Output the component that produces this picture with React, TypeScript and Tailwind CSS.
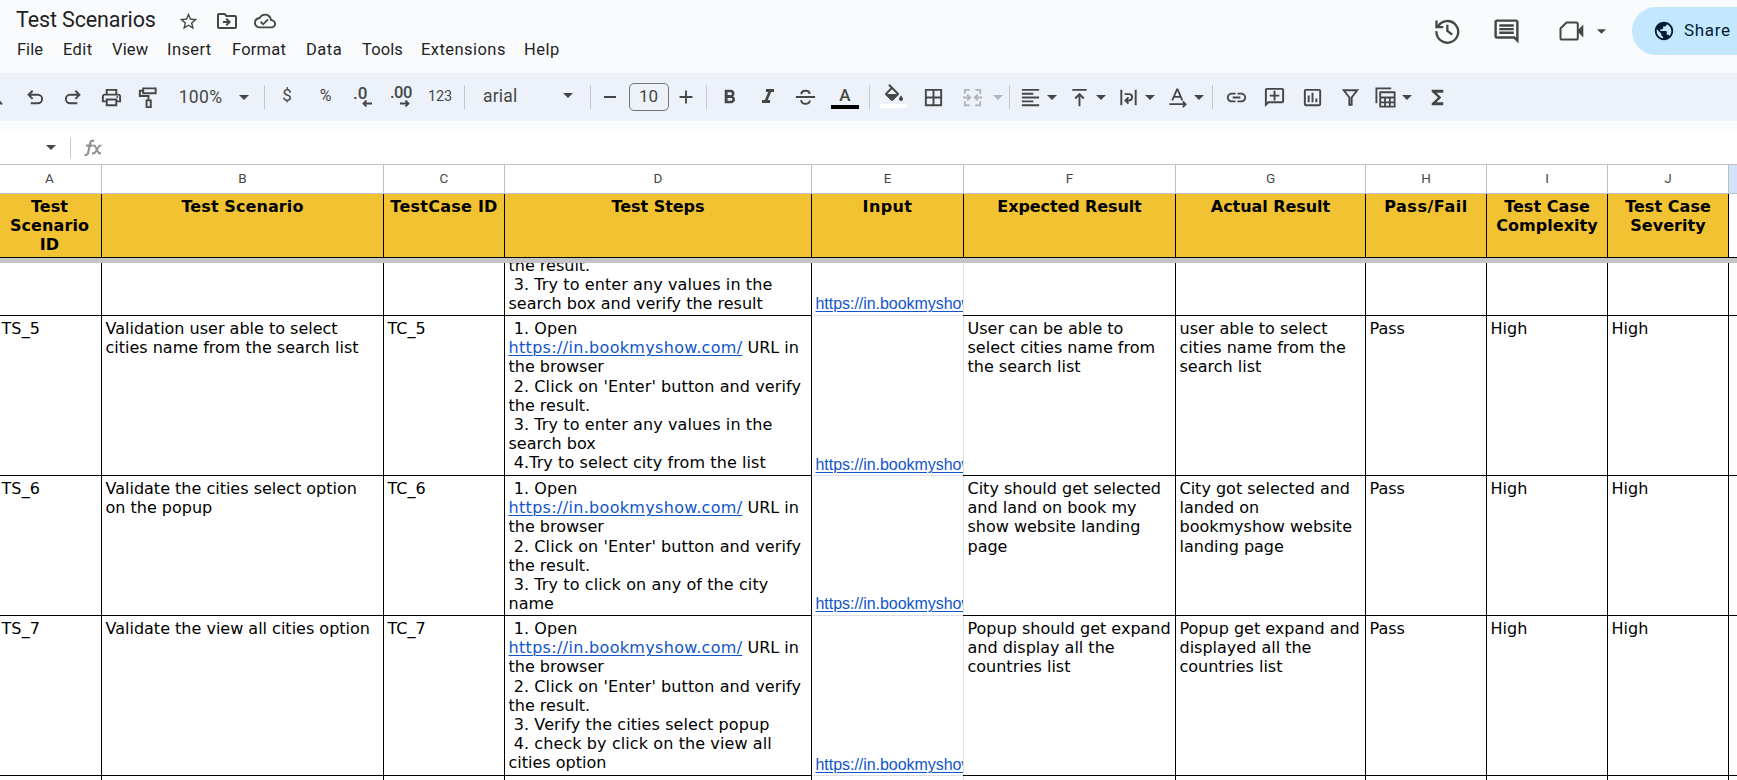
import React from "react";
import {
  MdStarBorder,
  MdOutlineDriveFileMove,
  MdOutlineCloudDone,
  MdOutlinePrint,
  MdFormatBold,
  MdFormatItalic,
  MdBorderAll,
  MdFormatAlignLeft,
  MdLink,
  MdOutlineAddComment,
  MdOutlineInsertChart,
  MdFunctions,
  MdOutlineComment,
  MdPublic,
} from "react-icons/md";

const URL_TEXT = "https://in.bookmyshow.com/";

type Row = {
  height: string;
  id: string;
  scenario: string[];
  tc: string;
  steps: string[];
  expected: string[];
  actual: string[];
  pass: string;
  level: string;
  clipped?: boolean;
  linkPad: string;
};

const openSteps = [" 1. Open", URL_TEXT + " URL in", "the browser", " 2. Click on 'Enter' button and verify", "the result."];

const rows: Row[] = [
  {
    height: "h-[52px]",
    id: "",
    scenario: [],
    tc: "",
    steps: ["the result.", " 3. Try to enter any values in the", "search box and verify the result"],
    expected: [],
    actual: [],
    pass: "",
    level: "",
    clipped: true,
    linkPad: "pb-0.5",
  },
  {
    height: "h-[159px]",
    id: "TS_5",
    scenario: ["Validation user able to select", "cities name from the search list"],
    tc: "TC_5",
    steps: [...openSteps, " 3. Try to enter any values in the", "search box", " 4.Try to select city from the list"],
    expected: ["User can be able to", "select cities name from", "the search list"],
    actual: ["user able to select", "cities name from the", "search list"],
    pass: "Pass",
    level: "High",
    linkPad: "pb-px",
  },
  {
    height: "h-[139px]",
    id: "TS_6",
    scenario: ["Validate the cities select option", "on the popup"],
    tc: "TC_6",
    steps: [...openSteps, " 3. Try to click on any of the city", "name"],
    expected: ["City should get selected", "and land on book my", "show website landing", "page"],
    actual: ["City got selected and", "landed on", "bookmyshow website", "landing page"],
    pass: "Pass",
    level: "High",
    linkPad: "pb-0.5",
  },
  {
    height: "h-[159px]",
    id: "TS_7",
    scenario: ["Validate the view all cities option"],
    tc: "TC_7",
    steps: [...openSteps, " 3. Verify the cities select popup", " 4. check by click on the view all", "cities option"],
    expected: ["Popup should get expand", "and display all the", "countries list"],
    actual: ["Popup get expand and", "displayed all the", "countries list"],
    pass: "Pass",
    level: "High",
    linkPad: "pb-px",
  },
];

const columns = [
  { letter: "A", w: "w-[102px] pr-0.5", title: ["Test", "Scenario", "ID"], track: "tracking-[0.1px]" },
  { letter: "B", w: "w-[282px]", title: ["Test Scenario"], track: "tracking-[0.1px]" },
  { letter: "C", w: "w-[121px]", title: ["TestCase ID"], track: "tracking-[0.25px]" },
  { letter: "D", w: "w-[307px]", title: ["Test Steps"], track: "tracking-[-0.05px]" },
  { letter: "E", w: "w-[152px]", title: ["Input"], track: "tracking-[0.4px]" },
  { letter: "F", w: "w-[212px]", title: ["Expected Result"], track: "tracking-[-0.1px]" },
  { letter: "G", w: "w-[190px]", title: ["Actual Result"], track: "tracking-[-0.05px]" },
  { letter: "H", w: "w-[121px]", title: ["Pass/Fail"], track: "tracking-[0.55px]" },
  { letter: "I", w: "w-[121px]", title: ["Test Case", "Complexity"], track: "tracking-[0.05px]" },
  { letter: "J", w: "w-[121px]", title: ["Test Case", "Severity"], track: "tracking-[0.05px]" },
];

function Slot({ className, children }: { className: string; children?: React.ReactNode }) {
  return <div className={`flex h-12 shrink-0 items-center justify-center ${className}`}>{children}</div>;
}

function Caret({ className = "" }: { className?: string }) {
  return (
    <svg className={`shrink-0 ${className}`} width="10" height="5" viewBox="0 0 10 5" fill="currentColor">
      <path d="M0 0h10L5 5z" />
    </svg>
  );
}

function Divider({ className }: { className: string }) {
  return <div className={`h-6 w-px shrink-0 bg-[#c7c7c7] ${className}`} />;
}

function Stroke({
  size = 23,
  children,
  width = 2,
  className = "",
}: {
  size?: number;
  children: React.ReactNode;
  width?: number;
  className?: string;
}) {
  return (
    <svg
      className={`shrink-0 ${className}`}
      width={size}
      height={size}
      viewBox="0 0 24 24"
      fill="none"
      stroke="currentColor"
      strokeWidth={width}
    >
      {children}
    </svg>
  );
}

function Lines({ lines }: { lines: string[] }) {
  return (
    <>
      {lines.map((line, i) => (
        <div key={i} className={`h-[19.2px] shrink-0 whitespace-pre ${line.startsWith(" ") ? "tracking-[0.1px]" : ""}`}>
          {line.startsWith(URL_TEXT) ? (
            <>
              <span className="tracking-[0.32px] text-[#1155cc] underline decoration-1 underline-offset-2">{URL_TEXT}</span>
              {line.slice(URL_TEXT.length)}
            </>
          ) : (
            line
          )}
        </div>
      ))}
    </>
  );
}

function Cell({ className, lines, bottom }: { className: string; lines: string[]; bottom?: boolean }) {
  return (
    <div
      className={`flex shrink-0 flex-col overflow-hidden border-r border-black pl-[3.5px] ${bottom ? "justify-end pb-[1.6px]" : "pt-[3px]"} ${className}`}
    >
      <Lines lines={lines} />
    </div>
  );
}

function RowLine() {
  return (
    <div className="flex h-px shrink-0">
      <div className="w-[812px] shrink-0 bg-black" />
      <div className="w-[151px] shrink-0 bg-[#e1e1e1]" />
      <div className="flex-1 bg-black" />
    </div>
  );
}

function Header() {
  const menus = [
    ["File", "w-[46px]"],
    ["Edit", "w-[49px] tracking-[0.4px]"],
    ["View", "w-[55px] tracking-[0.15px]"],
    ["Insert", "w-[65px] tracking-[0.4px]"],
    ["Format", "w-[74px] tracking-[0.2px]"],
    ["Data", "w-[56px] tracking-[0.5px]"],
    ["Tools", "w-[59px] tracking-[0.1px]"],
    ["Extensions", "w-[103px] tracking-[0.45px]"],
    ["Help", "w-[50px] tracking-[0.5px]"],
  ];
  return (
    <header className="flex h-[73px] shrink-0 items-start justify-between">
      <div className="flex flex-col text-[#1f1f1f]">
        <div className="flex h-10 items-center pl-4 text-[#444746]">
          <div className="w-[161px] whitespace-nowrap text-[21.5px] tracking-[-0.12px] text-[#1f1f1f]">Test Scenarios</div>
          <div className="flex items-center pl-px pt-0.5">
            <MdStarBorder className="size-[21px]" />
            <MdOutlineDriveFileMove className="ml-4 size-6" />
            <MdOutlineCloudDone className="ml-[15px] size-[22px]" />
          </div>
        </div>
        <nav className="flex h-5 items-center pl-[17px] text-[16.5px]">
          {menus.map(([m, w]) => (
            <div key={m} className={`shrink-0 whitespace-nowrap pt-px ${w}`}>
              {m}
            </div>
          ))}
        </nav>
      </div>
      <div className="flex h-[62px] items-center text-[#444746]">
        <Stroke size={28} width={2} className="mb-0.5">
          <path d="M4.2 9A9.300 9.300 0 1 1 3 13" />
          <path d="M3 3.8v5.800h5.800M12.300 7.500v5.200l4.200 3.300" />
        </Stroke>
        <MdOutlineComment className="ml-[31px] size-[29px]" />
        <svg className="ml-[38px]" width="25" height="20" viewBox="0 0 25 20">
          <path d="M7.5 1.500h9.700q1.600 0 1.600 1.600v13.800q0 1.600-1.600 1.600H3.100q-1.600 0-1.600-1.600V7.500z" fill="none" stroke="currentColor" strokeWidth="2" />
          <path d="M19 9l5.300-5.500v13L19 11z" fill="currentColor" />
        </svg>
        <Caret className="ml-[13px] w-[9px]" />
        <button className="ml-[26px] flex h-12 w-[105px] items-center rounded-l-full bg-[#c2e7ff] pl-[21px] text-[17px] tracking-[0.7px] text-[#001d35]">
          <MdPublic className="mr-[9px] size-[22px]" />
          Share
        </button>
      </div>
    </header>
  );
}

function Toolbar() {
  return (
    <div className="flex h-12 shrink-0 items-center overflow-hidden bg-[#edf2fa] text-[#444746]">
      <Slot className="w-[17px]">
        <svg width="17" height="20" viewBox="0 0 17 20" stroke="currentColor" strokeWidth="2">
          <path d="M-4 10l6 7.5" />
        </svg>
      </Slot>
      <Slot className="w-[37px]">
        <Stroke>
          <path d="M9 5L4.8 9.2L9 13.4M5 9.2h9.5a4.4 4.4 0 0 1 0 8.8H7" />
        </Stroke>
      </Slot>
      <Slot className="w-[37px]">
        <Stroke>
          <path d="M15 5l4.2 4.2L15 13.4M19 9.2H9.5a4.4 4.4 0 0 0 0 8.8H17" />
        </Stroke>
      </Slot>
      <Slot className="w-10">
        <MdOutlinePrint className="size-[23px]" />
      </Slot>
      <Slot className="w-[34px] pr-[1.5px]">
        <Stroke>
          <path d="M7.5 2.5h13v5h-13zM7.5 5H4v5.5h9V15M11 15h4.4v7H11z" />
        </Stroke>
      </Slot>
      <Slot className="w-[71px] text-[17.5px] tracking-[0.3px]">100%</Slot>
      <Slot className="w-4">
        <Caret />
      </Slot>
      <Divider className="ml-3" />
      <Slot className="w-11 pb-0.5 text-[17px]">$</Slot>
      <Slot className="w-[33px] pb-0.5 text-base">%</Slot>
      <Slot className="w-[41px]">
        <div className="flex w-[19px] flex-col pb-px">
          <span className="h-3.5 text-[17px] font-medium leading-[14px]">.0</span>
          <svg className="ml-[9px]" width="10" height="7" viewBox="0 0 10 7" fill="none" stroke="currentColor" strokeWidth="1.8">
            <path d="M10 3.5H1.5M4.5.5l-3 3 3 3" />
          </svg>
        </div>
      </Slot>
      <Slot className="w-9">
        <div className="flex w-[22px] flex-col pb-px">
          <span className="h-3.5 text-[16.5px] font-medium leading-[14px] tracking-[-0.5px]">.00</span>
          <svg className="ml-[10px]" width="10" height="7" viewBox="0 0 10 7" fill="none" stroke="currentColor" strokeWidth="1.8">
            <path d="M0 3.5h8.5M5.5.5l3 3-3 3" />
          </svg>
        </div>
      </Slot>
      <Slot className="w-[43px] pr-px text-[14.5px] tracking-[-0.2px]">123</Slot>
      <Divider className="ml-0.5" />
      <div className="flex h-12 w-[94px] shrink-0 items-center pb-px pl-[18px] text-[17.5px] tracking-[0.2px]">arial</div>
      <Slot className="w-[18px] pb-[3px]">
        <Caret />
      </Slot>
      <Divider className="ml-[13px]" />
      <Slot className="w-[38px]">
        <div className="h-0.5 w-3 bg-[#444746]" />
      </Slot>
      <div className="flex h-7 w-10 shrink-0 items-center justify-center rounded-[5px] border border-[#747775] pr-px text-[17px]">
        10
      </div>
      <Slot className="w-[34px]">
        <Stroke size={14}>
          <path d="M12 1v22M1 12h22" strokeWidth="3.2" />
        </Stroke>
      </Slot>
      <Divider className="ml-[3px]" />
      <Slot className="w-[45px]">
        <MdFormatBold className="size-[23px]" />
      </Slot>
      <Slot className="w-8 pr-px">
        <MdFormatItalic className="size-6" />
      </Slot>
      <Slot className="w-[43px]">
        <Stroke>
          <path d="M2 11.5h20M7.6 8.6C7.6 4 16 3.6 16.4 8.2M7.4 14.6c.4 5.4 9 5 9.2.6" />
        </Stroke>
      </Slot>
      <Slot className="w-9">
        <div className="flex w-7 flex-col items-center pt-0.5">
          <span className="h-[18px] text-[17px] font-medium leading-[17px]">A</span>
          <div className="h-1 w-7 bg-black" />
        </div>
      </Slot>
      <Divider className="ml-1.5" />
      <Slot className="w-[47px] pb-0.5">
        <div className="flex w-[27px] flex-col items-center">
          <svg className="h-5 w-6" viewBox="0 0 24 20" fill="currentColor">
            <path d="M16.560 8.940L7.620 0 6.210 1.410l2.380 2.380-5.150 5.150c-.590.590-.590 1.540 0 2.120l5.500 5.500c.290.290.680.440 1.060.440s.770-.150 1.060-.440l5.500-5.500c.590-.580.590-1.530 0-2.120zM5.210 10L10 5.210 14.790 10H5.210zM19 11.500s-2 2.170-2 3.500c0 1.100.9 2 2 2s2-.9 2-2c0-1.330-2-3.500-2-3.500z" />
          </svg>
          <div className="h-1 w-[27px] bg-white" />
        </div>
      </Slot>
      <Slot className="w-8">
        <MdBorderAll className="size-[23px]" />
      </Slot>
      <Slot className="ml-2 w-[31px] text-[#b1b4b8]">
        <Stroke>
          <path d="M9 4H4v4M4 16v4h5M15 4h5v4M20 16v4h-5M2 12h7M6.5 9l3 3-3 3M22 12h-7M17.5 9l-3 3 3 3" />
        </Stroke>
      </Slot>
      <Slot className="w-[19px] text-[#b1b4b8]">
        <Caret />
      </Slot>
      <Divider className="ml-0.5" />
      <Slot className="ml-2 w-6">
        <MdFormatAlignLeft className="size-[23px]" />
      </Slot>
      <Slot className="w-5">
        <Caret />
      </Slot>
      <Slot className="ml-1 w-[26px]">
        <Stroke>
          <path d="M4.500 4h15M12 21V9M7.500 13L12 8.500l4.500 4.500" />
        </Stroke>
      </Slot>
      <Slot className="w-[18px]">
        <Caret />
      </Slot>
      <Slot className="ml-[5px] w-[26px]">
        <Stroke>
          <path d="M4.500 4v16M19.500 4v16M8 8.500h4.500a3.300 3.300 0 0 1 0 6.600H9.500M12 11.800l-3.200 3.300 3.200 3.300" />
        </Stroke>
      </Slot>
      <Slot className="w-[17px]">
        <Caret />
      </Slot>
      <Slot className="ml-1.5 w-[26px]">
        <Stroke>
          <path d="M6.500 15L11.500 3.500h.6L17 15M8.200 11.300h7.200M3.500 19H20M17.500 16l3 3-3 3" strokeWidth="1.9" />
        </Stroke>
      </Slot>
      <Slot className="w-[17px]">
        <Caret />
      </Slot>
      <Divider className="ml-[5px]" />
      <Slot className="ml-1 w-[38px]">
        <MdLink className="size-[23px]" />
      </Slot>
      <Slot className="w-[38px]">
        <MdOutlineAddComment className="size-[23px] -scale-x-100" />
      </Slot>
      <Slot className="w-[38px]">
        <MdOutlineInsertChart className="size-[23px]" />
      </Slot>
      <Slot className="w-[38px]">
        <Stroke>
          <path d="M5 4.500h14L13.200 12v7.500h-2.400V12z" />
        </Stroke>
      </Slot>
      <Slot className="w-[33px]">
        <Stroke>
          <path d="M2.500 18V2.500H18M6.500 6.500h15v15h-15zM6.500 12h15M6.500 17h15M11.500 12v9.500M16.500 12v9.500" strokeWidth="1.900" />
        </Stroke>
      </Slot>
      <Slot className="w-2.5">
        <Caret />
      </Slot>
      <Slot className="ml-2.5 w-[30px]">
        <MdFunctions className="size-[23px]" />
      </Slot>
    </div>
  );
}

export default function App() {
  return (
    <div className="flex h-[780px] w-[1737px] flex-col overflow-hidden bg-[#f9fbfd] font-['Roboto',sans-serif]">
      <Header />
      <Toolbar />
      <div className="mt-2.5 flex h-[33px] shrink-0 items-center bg-white text-[#444746]">
        <Caret className="ml-[46px]" />
        <div className="ml-3.5 h-5 w-px bg-[#c7c7c7]" />
        <svg className="ml-3" width="20" height="20" viewBox="0 0 20 20" fill="none" stroke="#8f9192" strokeWidth="2.1">
          <path d="M1.500 16.800c3 .8 3.500-1.200 4-3.600l1.600-8c.5-2.300 1.600-3 4-2.300M3.200 7.600h6.300" />
          <path d="M9.500 7.600h2.300l4 7.600h2.300M9 15.200h2.500l5-7.600h2" strokeWidth="1.900" />
        </svg>
      </div>

      <main className="flex flex-1 flex-col bg-white">
        <div className="flex h-[30px] shrink-0 border-y border-[#c0c0c0] text-[13.5px] text-[#444746]">
          {columns.map((c) => (
            <div key={c.letter} className={`flex shrink-0 items-center justify-center border-r border-[#c0c0c0] pb-px ${c.w}`}>
              {c.letter}
            </div>
          ))}
          <div className="flex-1 bg-[#d3e3fd]" />
        </div>

        <div className="flex h-[63px] shrink-0 font-['DejaVu_Sans',Verdana,sans-serif] text-base font-bold leading-[19.2px] text-black">
          {columns.map((c) => (
            <div
              key={c.letter}
              className={`flex shrink-0 flex-col items-center border-r border-black bg-[#f1c232] pt-[3px] ${c.w}`}
            >
              {c.title.map((t) => (
                <div key={t} className={`h-[19.2px] whitespace-nowrap ${c.track}`}>
                  {t}
                </div>
              ))}
            </div>
          ))}
        </div>
        <div className="h-px shrink-0 bg-black" />
        <div className="h-[5px] shrink-0 bg-[#c4c4c4]" />

        {rows.map((r, i) => (
          <React.Fragment key={i}>
            <div
              className={`flex shrink-0 font-['DejaVu_Sans',Verdana,sans-serif] text-base leading-[19.2px] text-black ${r.height}`}
            >
              <div className="flex w-[102px] shrink-0 flex-col border-r border-black pl-[1.500px] pt-[3px] tracking-[0.1px]">{r.id}</div>
              <Cell className="w-[282px]" lines={r.scenario} />
              <Cell className="w-[121px]" lines={[r.tc]} />
              <Cell className="w-[307px]" lines={r.steps} bottom={r.clipped} />
              <div className="flex w-[152px] shrink-0 items-end overflow-hidden border-r border-[#e1e1e1] pl-[3.5px] font-['Liberation_Sans',Arial,sans-serif]">
                <span
                  className={`whitespace-nowrap tracking-[-0.04px] text-[#1155cc] underline decoration-1 underline-offset-2 ${r.linkPad}`}
                >
                  {URL_TEXT}
                </span>
              </div>
              <Cell className="w-[212px]" lines={r.expected} />
              <Cell className="w-[190px]" lines={r.actual} />
              <Cell className="w-[121px]" lines={[r.pass]} />
              <Cell className="w-[121px]" lines={[r.level]} />
              <Cell className="w-[121px]" lines={[r.level]} />
            </div>
            <RowLine />
          </React.Fragment>
        ))}

        <div className="flex flex-1">
          {columns.map((c) => (
            <div
              key={c.letter}
              className={`shrink-0 border-r ${c.letter === "E" ? "border-[#e1e1e1]" : "border-black"} ${c.w}`}
            />
          ))}
        </div>
      </main>
    </div>
  );
}
